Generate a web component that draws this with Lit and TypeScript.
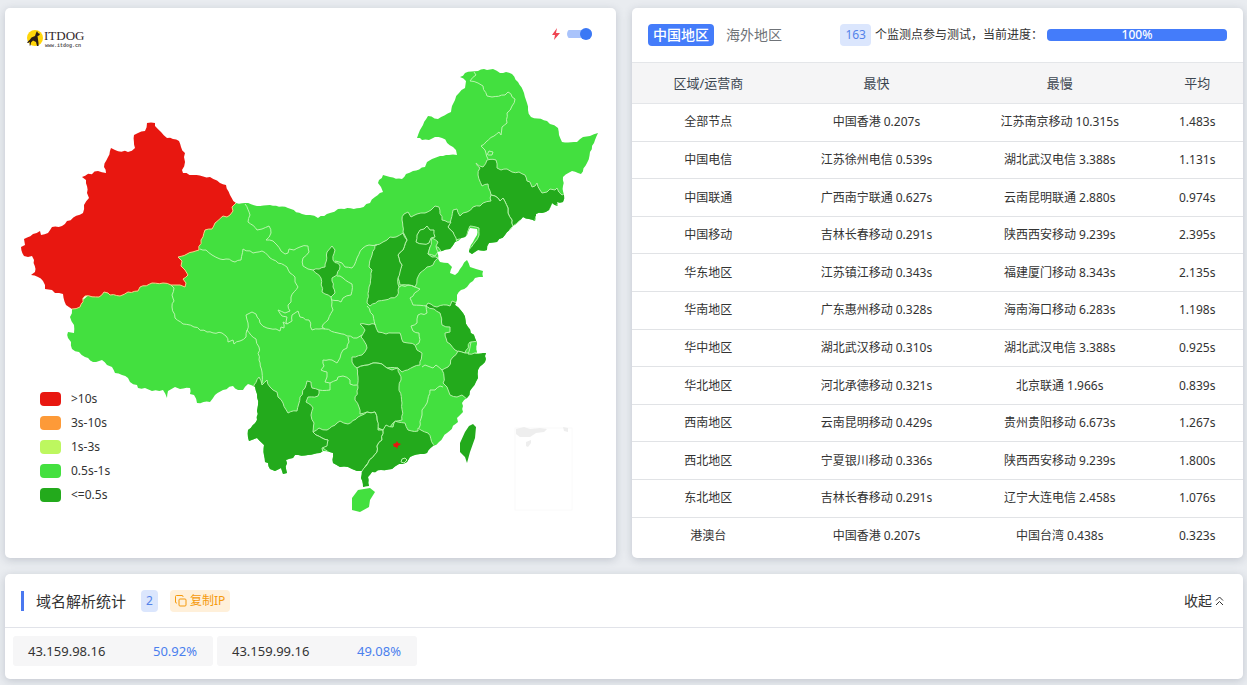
import { LitElement, html, svg, css } from "lit";
import { customElement, state } from "lit/decorators.js";

const LIGHT = "#43e03f";
const DARK = "#23aa1c";
const RED = "#e81710";

// Outlines are kept in the map's own drawing space.
const MAINLAND =
  "236,203 245,203 257,206 270,205 288,208 302,214 310,215 318,218 330,213 338,209 360,208 370,203 375,197 383,192 381,187 378,183 383,175 390,177 402,179 406,174 413,171 425,167 427,162 432,159 440,156 449,155 457,155 456,150 453,147 442,138 435,137 429,140 422,140 420,138 417,138 420,130 423,125 428,116 438,119 451,112 452,106 455,100 459,93 465,88 466,81 460,77 465,73 478,71 484,69 493,69 500,73 506,72 512,74 518,82 524,93 528,110 531,117 547,121 550,124 558,128 559,135 562,142 577,142 583,137 590,136 598,133 595,140 590,152 587,163 581,174 572,171 563,177 563,186 564,195 563,202 557,202 558,206 552,203 549,210 542,213 536,214 535,221 523,217 513,226 505,235 497,242 489,243 487,250 478,250 472,254 469,252 473,242 477,235 477,229 470,228 465,237 455,242 450,249 442,251 437,252 440,262 448,263 452,267 450,273 455,275 460,269 467,260 470,267 476,269 483,271 483,277 475,278 470,283 467,287 461,290 457,295 457,300 455,305 463,313 468,327 475,338 477,343 477,353 486,353 485,362 478,370 478,378 472,388 467,398 462,403 463,412 457,418 458,422 447,433 439,442 433,446 427,453 410,457 407,462 403,464 399,464 392,469 381,470 372,472 368,477 369,486 363,487 361,478 362,471 357,471 352,469 348,467 340,467 333,463 333,453 323,451 320,453 308,455 295,455 293,458 286,460 287,473 283,474 281,468 275,471 270,469 268,463 265,462 264,445 257,438 249,441 248,430 257,420 258,405 257,394 255,387 248,384 243,390 238,390 233,386 223,390 215,395 210,402 197,403 194,395 190,394 190,388 180,389 175,387 168,391 167,398 163,390 152,391 145,388 138,388 137,385 130,382 128,378 122,375 115,373 112,367 107,365 102,360 93,362 85,357 79,352 72,349 71,342 68,338 68,332 74,333 74,325 70,317 72,309 105,280 200,235";

const XINJIANG_INLAND =
  "236,203 232,207 233,211 230,215 227,217 223,216 215,223 212,229 205,230 201,240 199,250 187,254 178,257 182,261 181,266 185,270 188,275 183,279 186,283 185,287 180,285 175,285 171,285 163,283 152,283 140,287 138,291 128,292 120,296 110,295 108,293 104,292 99,297 85,296 80,307 72,309";

const XINJIANG =
  "147,123 155,123 155,126 161,132 167,138 173,139 179,141 181,147 185,153 184,157 185,162 182,170 183,173 193,175 210,177 220,183 226,185 230,195 " +
  XINJIANG_INLAND +
  " 66,305 63,294 55,293 52,290 45,289 45,285 43,281 38,277 31,275 35,272 34,260 32,256 24,256 21,247 25,245 24,239 33,234 40,231 41,235 48,233 52,227 62,226 67,221 83,213 84,205 89,198 87,193 86,180 82,177 98,171 106,173 104,167 111,148 115,150 128,152 135,148 134,135 138,133 145,131";

const DARK_PROVINCES = [
  // Jilin
  "476,163 483,167 487,160 496,160 497,168 501,170 507,169 512,172 519,172 525,175 527,181 530,182 532,187 535,186 537,183 540,190 542,193 547,192 550,189 555,190 557,188 562,195 564,194 566,202 557,204 558,208 552,205 549,212 542,215 536,216 535,223 523,219 519,221 513,226 512,220 508,213 508,208 503,198 500,201 495,196 491,195 488,184 482,186 478,175 480,168",
  // Liaoning
  "491,195 491,201 483,203 480,206 473,207 467,212 463,213 460,216 457,209 453,210 450,223 448,227 453,232 456,240 465,239 470,226 479,228 479,235 475,242 467,252 472,257 478,252 487,252 489,246 497,245 505,238 513,226 512,220 508,213 508,208 503,198 500,201 495,196",
  // Hebei
  "408,212 404,214 402,220 403,232 407,240 403,250 398,255 402,265 398,278 400,285 408,285 415,287 417,279 420,273 427,267 433,265 438,258 432,257 428,254 430,247 438,247 442,253 450,251 456,244 456,238 453,232 448,227 451,222 442,220 439,207 435,206 431,210 425,213 417,214 411,217",
  // Shanxi
  "375,245 383,242 390,237 396,237 403,233 407,240 403,250 398,255 402,265 400,272 398,278 399,287 397,296 385,300 378,301 370,306 367,303 369,287 372,270 369,267 372,255",
  // Ningxia
  "332,246 335,250 333,260 340,266 337,275 332,278 333,287 335,293 331,297 322,292 321,278 313,270 325,267 327,252",
  // Jiangsu
  "452,301 450,306 447,305 437,307 428,303 426,306 434,309 440,313 442,325 450,327 450,332 445,333 447,342 455,350 465,353 470,342 479,343 477,338 470,327 465,313 457,303",
  // Zhejiang
  "458,351 465,353 470,353 488,352 488,362 480,370 480,378 474,388 469,400 462,395 457,397 450,395 447,387 443,383 444,377 442,370 448,367 453,357",
  // Hubei
  "360,324 375,324 378,332 386,334 392,333 400,333 403,342 415,345 417,350 422,353 420,365 413,367 402,372 398,368 387,368 382,364 373,363 368,365 357,368 352,362 352,357 362,355 367,348 361,337 365,330",
  // Hunan
  "357,368 368,365 373,363 382,364 387,368 392,370 398,368 401,380 399,387 402,403 402,420 393,423 390,427 383,430 378,428 377,420 375,412 367,412 360,414 359,407 355,400 358,388 358,377",
  // Guangxi
  "313,432 319,428 327,430 337,423 340,421 348,424 358,417 367,412 375,412 377,420 378,430 383,430 382,440 377,446 377,452 368,463 362,473 357,473 352,471 348,469 340,469 331,465 331,455 323,448 328,440 322,438 316,435",
  // Guangdong
  "383,430 386,425 393,427 395,421 405,423 408,430 418,431 418,428 428,433 435,447 428,455 411,459 408,464 403,466 399,466 392,471 381,472 374,474 370,477 371,488 361,489 359,478 362,471 368,463 377,452 377,446 382,440",
  // Yunnan
  "259,377 262,385 267,380 270,387 277,392 278,397 283,403 288,413 297,411 300,397 305,388 307,381 311,382 312,388 319,390 318,396 308,397 306,402 313,408 311,415 314,423 313,432 316,435 322,438 328,440 327,446 322,448 323,453 320,455 308,457 297,457 293,460 288,462 289,475 281,476 281,471 275,473 268,471 266,465 263,464 262,447 257,440 247,443 246,430 255,420 256,405 255,394 254,385",
  // Taiwan
  "473,424 476,427 475,438 470,452 467,463 465,457 460,452 460,443 465,432 469,426",
];

const LIGHT_PROVINCES = [
  // Tianjin
  "432,238 438,242 436,246 438,252 435,256 428,254 430,247",
  // Shanghai
  "471,342 479,342 479,353 468,354",
  // Hainan
  "358,490 370,488 375,492 370,500 369,507 360,512 352,510 352,498",
];

const BORDERS = [
  "474,72 476,75 470,81 478,83 483,86 487,96 492,97 505,95 508,92 515,99 512,106 507,113 507,123 502,127 501,135 499,132 481,146 485,150 488,159",
  "487,155 489,151 493,152 492,155 488,155",
  "245,204 250,215 248,222 257,230 262,229 269,226 271,233 266,240 273,241 277,245 281,251 285,254 288,253 289,249 294,250 300,247 308,246 309,252 303,258 303,266 308,269 313,270",
  "335,261 342,263 345,267 352,268 357,258 363,248 369,245 377,245",
  "200,249 206,250 212,255 220,259 226,259 235,262 241,260 243,249 253,253 262,251 270,258 287,267 290,273 295,277 295,282 298,287 291,297 291,302 288,305 290,311 285,313 278,310 282,316 287,317 286,322 287,324",
  "247,331 248,323 246,315 252,312 256,314 260,323 267,328 276,329 280,331 281,327 284,328 283,322 287,324 292,321 292,315 298,311 300,317 309,320 312,330 319,329 325,329 322,327 328,320 333,310 332,302 331,297",
  "337,276 340,276 343,278 352,284 351,295 343,298 341,302 332,300",
  "325,329 338,333 347,336 357,338 362,335",
  "348,337 349,342 347,348 343,350 340,358 337,363 332,360 323,360 324,366 321,370 327,372 327,377 325,382 330,383 330,390 319,390",
  "330,383 337,380 338,377 343,376 350,380 350,384 357,385",
  "171,285 174,288 172,295 174,301 172,307 175,318 183,324 194,327 207,332 222,333 226,336 228,342 233,340 234,344 240,341 246,337 247,330 256,339 259,347 259,360 262,372 262,383",
  "367,306 373,315 375,325",
  "399,287 408,285 415,287 420,289 410,298 413,305 427,306",
  "426,306 427,313 418,315 417,323 411,326 413,331 419,333 419,343 416,345",
  "422,367 425,365 433,368 436,365 442,370",
  "443,387 440,386 435,390 430,390 427,403 422,410 422,415 419,428",
  "427,226 430,230 434,230 435,237 431,238 429,243 423,244 416,242 417,235 420,230 424,229 427,226",
];

type Point = [number, number];

// Splits long edges and shifts the new vertices a little, so that borders look
// surveyed. The shift depends only on the edge, in either direction, so
// neighbouring provinces keep a common border.
function crinkle(points: string, closed = true): string {
  const list = points.split(" ").map((pair) => pair.split(",").map(Number) as Point);
  const out: string[] = [];
  const edges = closed ? list.length : list.length - 1;
  for (let i = 0; i < edges; i++) {
    const from = list[i];
    const to = list[(i + 1) % list.length];
    out.push(from.join(","));
    const length = Math.hypot(to[0] - from[0], to[1] - from[1]);
    const parts = Math.min(8, Math.floor(length / 3));
    const flip = from[0] > to[0] || (from[0] === to[0] && from[1] > to[1]);
    const [a, b] = flip ? [to, from] : [from, to];
    const inner: string[] = [];
    for (let k = 1; k < parts; k++) {
      const t = k / parts;
      const seed = Math.sin(a[0] * 12.9 + a[1] * 78.2 + b[0] * 3.7 + b[1] * 9.1 + k * 41.3) * 43758.5;
      const shift = (seed - Math.floor(seed) - 0.5) * 1.8;
      const x = a[0] + (b[0] - a[0]) * t - ((b[1] - a[1]) / length) * shift;
      const y = a[1] + (b[1] - a[1]) * t + ((b[0] - a[0]) / length) * shift;
      inner.push(`${x.toFixed(1)},${y.toFixed(1)}`);
    }
    out.push(...(flip ? inner.reverse() : inner));
  }
  if (!closed) out.push(list[list.length - 1].join(","));
  return out.join(" ");
}

interface RegionRow {
  region: string;
  fastest: string;
  slowest: string;
  average: string;
}

const ROWS: RegionRow[] = [
  ["全部节点", "中国香港 0.207s", "江苏南京移动 10.315s", "1.483s"],
  ["中国电信", "江苏徐州电信 0.539s", "湖北武汉电信 3.388s", "1.131s"],
  ["中国联通", "广西南宁联通 0.627s", "云南昆明联通 2.880s", "0.974s"],
  ["中国移动", "吉林长春移动 0.291s", "陕西西安移动 9.239s", "2.395s"],
  ["华东地区", "江苏镇江移动 0.343s", "福建厦门移动 8.343s", "2.135s"],
  ["华南地区", "广东惠州移动 0.328s", "海南海口移动 6.283s", "1.198s"],
  ["华中地区", "湖北武汉移动 0.310s", "湖北武汉电信 3.388s", "0.925s"],
  ["华北地区", "河北承德移动 0.321s", "北京联通 1.966s", "0.839s"],
  ["西南地区", "云南昆明移动 0.429s", "贵州贵阳移动 6.673s", "1.267s"],
  ["西北地区", "宁夏银川移动 0.336s", "陕西西安移动 9.239s", "1.800s"],
  ["东北地区", "吉林长春移动 0.291s", "辽宁大连电信 2.458s", "1.076s"],
  ["港澳台", "中国香港 0.207s", "中国台湾 0.438s", "0.323s"],
].map(([region, fastest, slowest, average]) => ({ region, fastest, slowest, average }));

@customElement("china-map")
class ChinaMap extends LitElement {
  static styles = css`
    :host { display: block; }
    .map { display: block; width: 100%; height: auto; }
    .inner { fill: none; stroke: #b9f5ae; stroke-width: 1; stroke-linejoin: round; }
    .province { stroke: #b4f0a8; stroke-width: 1; stroke-linejoin: round; }
    .hot { stroke: #f9d08a; }
    .inset { fill: none; stroke: #fafafa; }
    .islands { fill: #eeeeee; }
  `;

  render() {
    const coast = crinkle(MAINLAND);
    return html`
      <svg class="map" viewBox="5 8 611 550" role="img" aria-label="中国地图">
        <clipPath id="land"><polygon points=${coast} /></clipPath>
        <polygon points=${coast} fill=${LIGHT} />
        <g clip-path="url(#land)">
          ${DARK_PROVINCES.slice(0, -1).map(
            (points) => svg`<polygon class="province" points=${crinkle(points)} fill=${DARK} />`
          )}
          ${LIGHT_PROVINCES.slice(0, -1).map(
            (points) => svg`<polygon class="province" points=${crinkle(points)} fill=${LIGHT} />`
          )}
          ${BORDERS.map((points) => svg`<polyline class="inner" points=${crinkle(points, false)} />`)}
        </g>
        <polygon points=${crinkle(XINJIANG)} fill=${RED} />
        <polyline class="inner hot" points=${crinkle(XINJIANG_INLAND, false)} />
        <polygon points=${DARK_PROVINCES[DARK_PROVINCES.length - 1]} fill=${DARK} />
        <polygon points=${LIGHT_PROVINCES[LIGHT_PROVINCES.length - 1]} fill=${LIGHT} />
        <path class="inner" d="M401 462l1-3 3-1 2 2-3 3z" />
        <path fill=${RED} d="M393 444l3-1 1-2 1 2 3 1-3 2-1 3-1-2-2 0z" />
        <rect class="inset" x="515" y="428" width="57" height="82" />
        <path class="islands" d="M516 429l8-2 6 2 10-1 7 1-3 3-8 1-6 4h-10l-4-3zM563 427l5 1 0 4-4-1zM526 442l5-2 0 3-3 4-2-1z" />
      </svg>
    `;
  }
}

@customElement("app-root")
class AppRoot extends LitElement {
  static styles = css`
    :host {
      display: block;
      box-sizing: border-box;
      min-height: 100vh;
      padding: 8px 4px 6px 5px;
      background: #e9ecf0;
      color: #333;
      font: 12px/18px "Noto Sans", "Noto Sans CJK SC", sans-serif;
    }
    button {
      border: 0;
      margin: 0;
      padding: 0;
      background: none;
      font: inherit;
      color: inherit;
      cursor: pointer;
    }
    .top {
      display: grid;
      grid-template-columns: 1fr 1fr;
      gap: 16px;
      margin-bottom: 16px;
    }
    .card {
      background: #fff;
      border-radius: 5px;
      box-shadow: 0 2px 8px rgba(60, 70, 90, 0.22);
    }
    .map-card { display: grid; }
    .map-card > * { grid-area: 1 / 1; }
    .logo {
      justify-self: start;
      align-self: start;
      margin: 20px 21px;
      display: block;
    }
    .logo svg { display: block; }
    .mode {
      justify-self: end;
      align-self: start;
      display: flex;
      align-items: center;
      gap: 7px;
      margin: 20px 24px;
    }
    .mode svg { display: block; }
    .switch {
      appearance: none;
      display: flex;
      align-items: center;
      margin: 0;
      width: 25px;
      height: 12px;
      cursor: pointer;
      background: linear-gradient(#a9c3fb, #a9c3fb) center / 100% 8px no-repeat;
      border-radius: 6px;
    }
    .switch::before {
      content: "";
      width: 12px;
      height: 12px;
      border-radius: 50%;
      background: #fff;
      box-shadow: 0 0 2px #888;
    }
    .switch:checked { justify-content: flex-end; }
    .switch:checked::before { background: #3b78f5; box-shadow: none; }
    .legend {
      justify-self: start;
      align-self: end;
      list-style: none;
      margin: 0 35px 51px;
      padding: 0;
    }
    .legend li {
      display: flex;
      align-items: center;
      gap: 10px;
      height: 24px;
    }
    .swatch { width: 21px; height: 14px; border-radius: 4px; }
    .s1 { background: #e81710; }
    .s2 { background: #fd9a38; }
    .s3 { background: #bdf75f; }
    .s4 { background: #43e03f; }
    .s5 { background: #23aa1c; }

    .table-card { display: grid; grid-template-rows: auto 1fr; padding-bottom: 4px; }
    .bar {
      display: flex;
      align-items: center;
      justify-content: space-between;
      height: 54px;
      padding: 0 16px;
    }
    .tabs { display: flex; gap: 8px; font-size: 14px; line-height: 22px; color: #6f7378; }
    .tab { padding: 0 4px; border-radius: 4px; height: 22px; }
    .tab.on { padding: 0 5px; background: #447cfa; color: #fff; font-weight: 500; }
    .status { display: flex; align-items: center; gap: 4px; white-space: nowrap; }
    .count {
      background: #dbe6fd;
      color: #5483ea;
      border-radius: 4px;
      padding: 0 5px;
      font-size: 12px;
      line-height: 22px;
    }
    .progress {
      width: 180px;
      height: 12px;
      border-radius: 4px;
      background: #e9ecef;
    }
    .fill {
      display: flex;
      align-items: center;
      justify-content: center;
      height: 100%;
      border-radius: 4px;
      background: #447cfa;
      color: #fff;
      font-weight: 500;
    }
    .data { width: 100%; border-collapse: collapse; table-layout: fixed; }
    .data th {
      height: 40px;
      padding: 0;
      background: #f5f5f6;
      border-top: 1px solid #e4e6e9;
      border-bottom: 1px solid #e4e6e9;
      font-size: 13px;
      font-weight: 400;
      color: #3c4650;
    }
    .data td { padding: 0; text-align: center; border-bottom: 1px solid #e1e3e6; }
    .data tr:last-child td { border-bottom: 0; }
    .w25 { width: 25%; }
    .w30 { width: 30%; }
    .w15 { width: 15%; }

    .dns-head {
      display: flex;
      align-items: center;
      height: 53px;
      padding: 0 19px 0 16px;
      border-bottom: 1px solid #e1e3e9;
    }
    .title {
      margin: 0;
      padding-left: 12px;
      border-left: 3px solid #4a78f0;
      font-size: 15px;
      line-height: 20px;
      font-weight: 400;
    }
    .num { margin: 0 12px 0 15px; }
    .copy {
      display: flex;
      align-items: center;
      gap: 3px;
      padding: 0 5px;
      border-radius: 4px;
      background: #fff0da;
      color: #f59a0c;
      line-height: 22px;
    }
    .fold {
      display: flex;
      align-items: center;
      gap: 3px;
      margin-left: auto;
      font-size: 14px;
      line-height: 20px;
    }
    .copy svg, .fold svg { display: block; }
    .ips { display: flex; flex-wrap: wrap; gap: 4px; margin: 0; padding: 8px 8px 13px; list-style: none; }
    .ips li {
      box-sizing: border-box;
      width: 200px;
      padding: 0 16px 0 15px;
      display: flex;
      justify-content: space-between;
      background: #f6f6f7;
      border-radius: 3px;
      font-size: 13px;
      line-height: 30px;
    }
    .pct { color: #4a7fee; }
  `;

  @state() private tab = 0;
  @state() private open = true;

  render() {
    const legend = [">10s", "3s-10s", "1s-3s", "0.5s-1s", "<=0.5s"];
    const tabs = ["中国地区", "海外地区"];
    const ips = [
      ["43.159.98.16", "50.92%"],
      ["43.159.99.16", "49.08%"],
    ];
    const progress = 100;
    return html`
      <div class="top">
        <section class="card map-card">
          <china-map></china-map>
          <a class="logo" href="#" aria-label="ITDOG">
            <svg width="60" height="22" viewBox="0 0 60 22">
              <circle cx="9" cy="10" r="8" fill="#ffd60a" />
              <path fill="#2b1d16" d="M11 3l1 2 2 1-1 1.500-1.500.5.5 3.500.5 3.500v3h-1.500l-1-4-3-1.500-2 2-.5 3H3.500l.5-3.500-2 1-1-.5 3-3 1.500-2 3.500-1.500L10 5z" />
              <text x="18" y="12" font-family="Liberation Serif, serif" font-size="13" fill="#30262a">ITDOG</text>
              <text x="19" y="19" font-family="Liberation Mono, monospace" font-size="5" font-weight="700" fill="#555">www.itdog.cn</text>
            </svg>
          </a>
          <label class="mode">
            <svg width="8" height="12" viewBox="0 0 8 12" aria-hidden="true">
              <path fill="#ef4452" d="M5 0L0 7h3L2 12l6-7H4z" />
            </svg>
            <input class="switch" type="checkbox" role="switch" aria-label="快速模式" checked />
          </label>
          <ul class="legend">
            ${legend.map((text, i) => html`<li><span class="swatch s${i + 1}"></span>${text}</li>`)}
          </ul>
        </section>

        <section class="card table-card">
          <div class="bar">
            <div class="tabs">
              ${tabs.map(
                (text, i) => html`<button
                  class="tab ${this.tab === i ? "on" : ""}"
                  @click=${() => (this.tab = i)}
                >${text}</button>`
              )}
            </div>
            <div class="status">
              <span class="count">163</span>
              <span>个监测点参与测试，当前进度：</span>
              <div class="progress" role="progressbar" aria-valuenow=${progress}>
                <div class="fill" style="width:${progress}%">${progress}%</div>
              </div>
            </div>
          </div>
          <table class="data">
            <thead>
              <tr>
                <th class="w25">区域/运营商</th>
                <th class="w30">最快</th>
                <th class="w30">最慢</th>
                <th class="w15">平均</th>
              </tr>
            </thead>
            <tbody>
              ${ROWS.map(
                (row) => html`<tr>
                  <td>${row.region}</td>
                  <td>${row.fastest}</td>
                  <td>${row.slowest}</td>
                  <td>${row.average}</td>
                </tr>`
              )}
            </tbody>
          </table>
        </section>
      </div>

      <section class="card">
        <div class="dns-head">
          <h2 class="title">域名解析统计</h2>
          <span class="count num">2</span>
          <button class="copy">
            <svg width="12" height="12" viewBox="0 0 12 12" fill="none" stroke="currentColor" aria-hidden="true">
              <rect x="4" y="4" width="7" height="7" rx="1" />
              <path d="M2 8H1.500Q.5 8 .5 7V1.500Q.5.5 1.500.5H7Q8 .5 8 1.500V2" />
            </svg>
            复制IP
          </button>
          <button class="fold" aria-expanded=${this.open} @click=${() => (this.open = !this.open)}>
            收起
            <svg width="9" height="10" viewBox="0 0 9 10" fill="none" stroke="currentColor" aria-hidden="true">
              <path d="M1 4.500L4.500 1 8 4.500M1 9l3.500-3.500L8 9" />
            </svg>
          </button>
        </div>
        ${this.open
          ? html`<ul class="ips">
              ${ips.map(([ip, pct]) => html`<li><span>${ip}</span><span class="pct">${pct}</span></li>`)}
            </ul>`
          : null}
      </section>
    `;
  }
}
